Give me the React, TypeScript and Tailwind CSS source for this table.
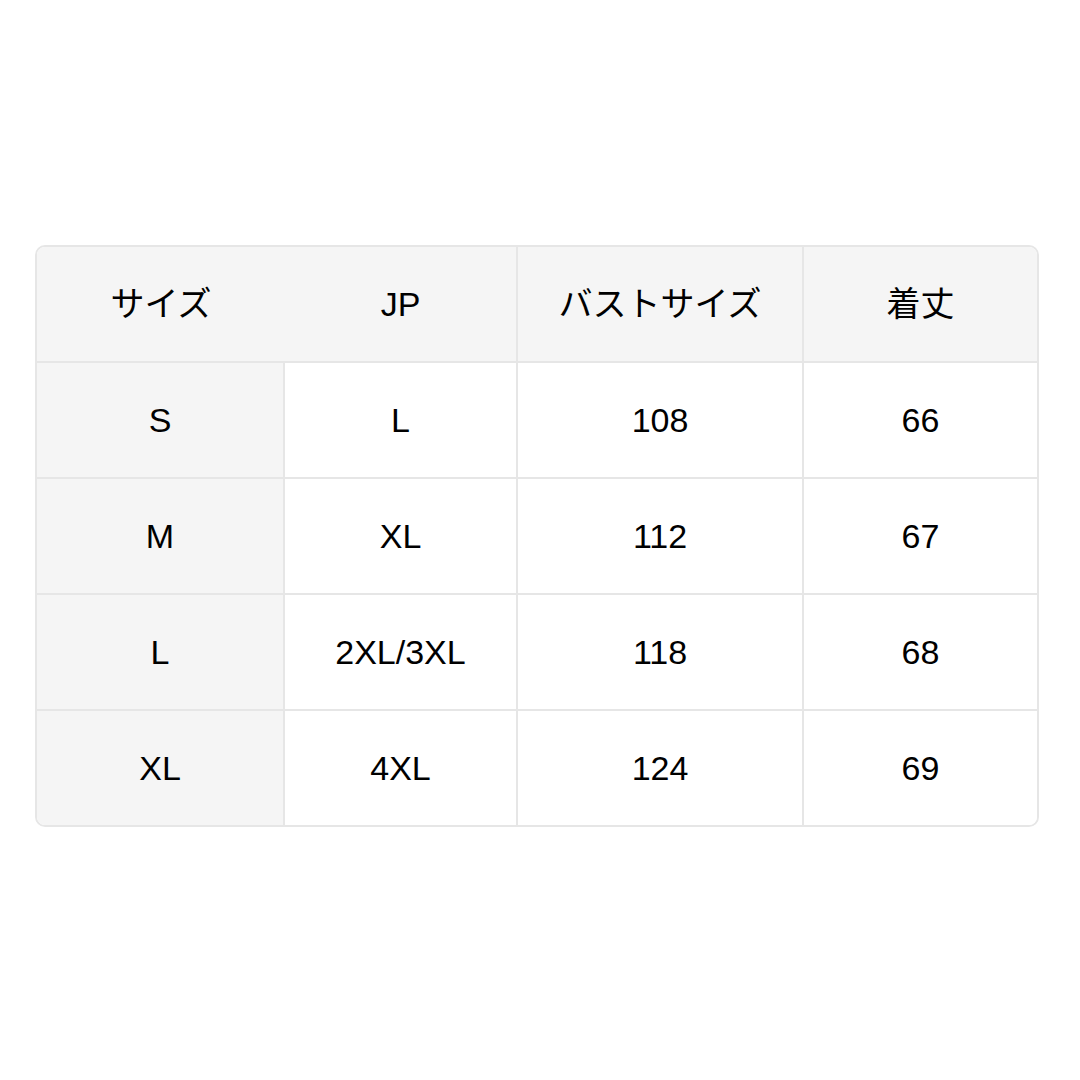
import React from "react";

const cols = ["w-[248px]", "w-[233px]", "w-[286px]", "w-[233px]"];

const header = ["サイズ", "JP", "バストサイズ", "着丈"];
const rows = [
  ["S", "L", "108", "66"],
  ["M", "XL", "112", "67"],
  ["L", "2XL/3XL", "118", "68"],
  ["XL", "4XL", "124", "69"],
];

export default function App() {
  return (
    <div
      className="w-[1080px] h-[1080px] bg-white flex items-center justify-center text-black"
      style={{ fontFamily: '"Liberation Sans", "Noto Sans CJK JP", sans-serif' }}
    >
      <div className="mt-[-8px] ml-[-6px] w-[1004px] border-2 border-[#e6e6e6] rounded-[10px] overflow-hidden flex flex-col">
        <div className="flex bg-[#f5f5f5] border-b-2 border-[#e6e6e6] h-[116px]">
          {header.map((h, i) => (
            <div
              key={i}
              className={`${cols[i]} flex items-center justify-center text-[34px] ${
                i === 1 || i === 2 ? "border-r-2 border-[#e6e6e6]" : ""
              }`}
            >
              {h}
            </div>
          ))}
        </div>
        {rows.map((r, ri) => (
          <div
            key={ri}
            className={`flex ${ri < rows.length - 1 ? "h-[116px] border-b-2 border-[#e6e6e6]" : "h-[114px]"}`}
          >
            {r.map((c, ci) => (
              <div
                key={ci}
                className={`${cols[ci]} flex items-center justify-center text-[34px] ${
                  ci === 0 ? "bg-[#f5f5f5]" : "bg-white"
                } ${ci < 3 ? "border-r-2 border-[#e6e6e6]" : ""}`}
              >
                {c}
              </div>
            ))}
          </div>
        ))}
      </div>
    </div>
  );
}
